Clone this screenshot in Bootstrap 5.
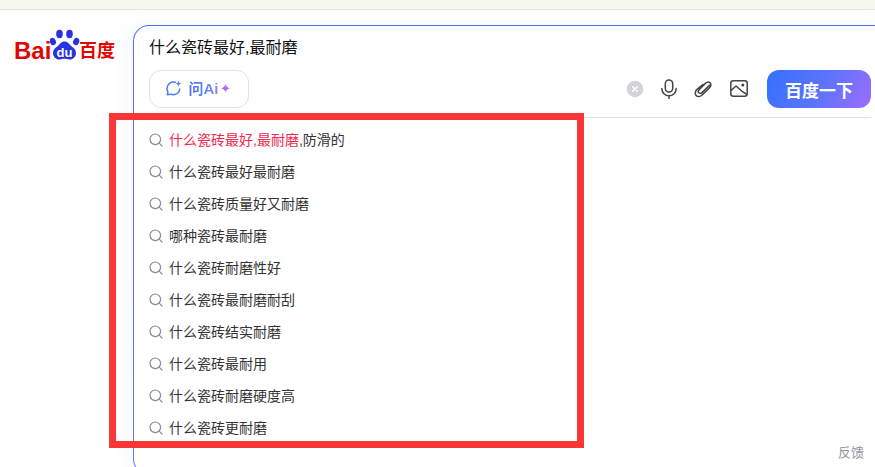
<!doctype html>
<html lang="zh-CN">
<head>
<meta charset="utf-8">
<title>百度一下</title>
<link href="https://cdn.jsdelivr.net/npm/bootstrap@5.3.0/dist/css/bootstrap.min.css" rel="stylesheet">
<style>
html,body{height:467px;overflow:hidden;background:#fff;}
body{position:relative;font-family:"Liberation Sans","Noto Sans CJK SC",sans-serif;color:#333;}
.strip{height:10px;background:#f6f8f0;border-bottom:1px solid #e3e5df;}
.logo-col{width:133px;flex:none;padding:18px 0 0 14px;}
.logo-wrap{display:flex;align-items:flex-end;height:34px;color:#e10601;font-weight:700;line-height:1;}
.logo-bai{font-size:24px;width:36px;line-height:17px;height:17px;display:block;margin-bottom:3px;}
.logo-cn{font-size:18px;line-height:18px;height:18px;display:block;margin-bottom:2px;margin-left:-1px;}
.paw{width:30px;height:34px;display:block;flex:none;}
.sbox{width:760px;flex:none;height:450px;margin-top:15px;border:1px solid transparent;border-radius:16px;
 background:linear-gradient(#fff,#fff) padding-box,linear-gradient(165deg,#4e6ef2 0%,#4e6ef2 35%,#9a7cf6 100%) border-box;
 box-shadow:-8px 0 16px rgba(110,130,240,.05);padding:0 15px;}
.sq{font-size:16px;line-height:22px;color:#111;padding-top:11px;height:44px;}
.tools{height:48px;border-bottom:1px solid #e0e0e0;width:722px;padding-bottom:10px;}
.ai-btn{width:100px;height:38px;border:1px solid #e1e1e6;border-radius:12px;background:#fff;gap:6px;padding:0 2px 0 0;}
.ai-txt{font-size:15px;font-weight:700;line-height:1;background:linear-gradient(90deg,#4e6ef2,#5f8bf5 60%,#a07cf0);-webkit-background-clip:text;background-clip:text;color:transparent;}
.ai-star{color:#b56af0;font-size:13px;line-height:1;margin-left:-5px;}
.tool-ic{display:block;flex:none;}
.go-btn{width:104px;height:38px;border-radius:12px;border:0;color:#fff;font-size:17px;font-weight:600;line-height:38px;padding:3px 0 0;
 background:linear-gradient(120deg,#3370ff 0%,#5f74fb 55%,#9d6dff 100%);}
.sug{padding:6px 0 0;margin:0;list-style:none;}
.sug li{height:32px;font-size:14px;line-height:32px;color:#333;gap:6px;}
.hit{color:#f5274e;}
.sug svg{flex:none;}
.frame{position:absolute;left:109px;top:113px;width:475px;height:335px;border:7px solid #fa3636;pointer-events:none;}
.fb{position:absolute;right:11px;top:445px;font-size:13px;line-height:16px;color:#9195a3;}
</style>
</head>
<body>
<div class="strip"></div>
<div class="d-flex">
  <div class="logo-col">
    <div class="logo-wrap">
      <span class="logo-bai">Bai</span>
      <svg class="paw" viewBox="0 0 30 34" aria-hidden="true">
        <g fill="#2932e1">
          <ellipse cx="9.5" cy="6" rx="3.3" ry="4.2"/>
          <ellipse cx="19.5" cy="6" rx="3.3" ry="4.2"/>
          <ellipse cx="2.8" cy="13.5" rx="3" ry="3.8" transform="rotate(-20 2.8 13.5)"/>
          <ellipse cx="26.2" cy="13.5" rx="3" ry="3.8" transform="rotate(20 26.2 13.5)"/>
          <path d="M14.5 13.5c3.2 0 4.4 2.4 6.4 4.2 2.2 1.9 5.1 3.4 5.1 7.2 0 4-3.1 6.6-6.6 6.6-1.9 0-3.2-.7-4.9-.7s-3 .7-4.9.7c-3.5 0-6.6-2.6-6.6-6.6 0-3.8 2.9-5.3 5.1-7.2 2-1.8 3.2-4.2 6.4-4.2z"/>
        </g>
        <text x="14.5" y="28.5" text-anchor="middle" fill="#fff" font-family="Liberation Sans" font-weight="700" font-size="13">du</text>
      </svg>
      <span class="logo-cn">百度</span>
    </div>
  </div>
  <div class="sbox">
    <div class="sq">什么瓷砖最好,最耐磨</div>
    <div class="tools d-flex align-items-center">
      <button type="button" class="ai-btn d-flex align-items-center justify-content-center">
        <svg width="17" height="17" viewBox="0 0 19 19" aria-hidden="true"><path d="M11.5 2.6A7.2 7.2 0 0 0 2.2 9.5c0 1.4.4 2.5 1 3.5l-.5 3.6 3.7-.8c.9.4 1.9.6 3 .6a7.2 7.2 0 0 0 7.1-6.2" fill="none" stroke="#4e7cf5" stroke-width="1.7" stroke-linecap="round" stroke-linejoin="round"/><path d="M15 1l.9 2.1L18 4l-2.1.9L15 7l-.9-2.1L12 4l2.1-.9z" fill="#4e7cf5"/></svg>
        <span class="ai-txt">问Ai</span><span class="ai-star">✦</span>
      </button>
      <div class="ms-auto d-flex align-items-center">
        <svg class="tool-ic" width="18" height="18" viewBox="0 0 18 18" aria-hidden="true"><circle cx="9" cy="9" r="8.3" fill="#d3d4da"/><path d="M6.7 6.7l4.6 4.6M11.3 6.7l-4.6 4.6" stroke="#fff" stroke-width="1.5" stroke-linecap="round"/></svg>
        <svg class="tool-ic ms-3" width="18" height="20" viewBox="0 0 18 20" aria-hidden="true"><rect x="5.3" y="1" width="7.4" height="12" rx="3.7" fill="none" stroke="#444" stroke-width="1.5"/><path d="M1.8 9.6a7.2 7.2 0 0 0 14.4 0M9 16.8V19.6" fill="none" stroke="#444" stroke-width="1.5" stroke-linecap="round"/></svg>
        <svg class="tool-ic" style="margin-left:16px" width="18" height="18" viewBox="0 0 18 18" aria-hidden="true"><path d="M15.4 5.2 8 12.6c-1 1-2.4 1-3.2.2s-.7-2.1.3-3.1l6.3-6.3c1.5-1.5 3.6-1.6 4.7-.5s1 3.2-.5 4.7l-7.2 7.2c-2 2-4.7 2.2-6.2.8s-1.2-4.2.8-6.2L8.9 4.5" fill="none" stroke="#444" stroke-width="1.5" stroke-linecap="round" stroke-linejoin="round"/></svg>
        <svg class="tool-ic" style="margin-left:18px" width="18" height="17" viewBox="0 0 18 17" aria-hidden="true"><rect x=".8" y=".8" width="16.4" height="15.4" rx="2.4" fill="none" stroke="#444" stroke-width="1.5"/><path d="M1 10.5 6 6l6 5.3 5 3.2" fill="none" stroke="#444" stroke-width="1.5" stroke-linejoin="round"/><circle cx="12.8" cy="5" r="1.5" fill="#444"/></svg>
        <button type="button" class="go-btn" style="margin-left:19px">百度一下</button>
      </div>
    </div>
    <ul class="sug">
      <li class="d-flex align-items-center"><svg width="14" height="14" viewBox="0 0 14 14" aria-hidden="true"><circle cx="6.3" cy="6.3" r="5.3" fill="none" stroke="#8a8a8f" stroke-width="1.2"/><path d="M10.2 10.2l2.9 2.9" stroke="#8a8a8f" stroke-width="1.2" stroke-linecap="round"/></svg><span><span class="hit">什么瓷砖最好,最耐磨</span>,防滑的</span></li>
      <li class="d-flex align-items-center"><svg width="14" height="14" viewBox="0 0 14 14" aria-hidden="true"><circle cx="6.3" cy="6.3" r="5.3" fill="none" stroke="#8a8a8f" stroke-width="1.2"/><path d="M10.2 10.2l2.9 2.9" stroke="#8a8a8f" stroke-width="1.2" stroke-linecap="round"/></svg><span>什么瓷砖最好最耐磨</span></li>
      <li class="d-flex align-items-center"><svg width="14" height="14" viewBox="0 0 14 14" aria-hidden="true"><circle cx="6.3" cy="6.3" r="5.3" fill="none" stroke="#8a8a8f" stroke-width="1.2"/><path d="M10.2 10.2l2.9 2.9" stroke="#8a8a8f" stroke-width="1.2" stroke-linecap="round"/></svg><span>什么瓷砖质量好又耐磨</span></li>
      <li class="d-flex align-items-center"><svg width="14" height="14" viewBox="0 0 14 14" aria-hidden="true"><circle cx="6.3" cy="6.3" r="5.3" fill="none" stroke="#8a8a8f" stroke-width="1.2"/><path d="M10.2 10.2l2.9 2.9" stroke="#8a8a8f" stroke-width="1.2" stroke-linecap="round"/></svg><span>哪种瓷砖最耐磨</span></li>
      <li class="d-flex align-items-center"><svg width="14" height="14" viewBox="0 0 14 14" aria-hidden="true"><circle cx="6.3" cy="6.3" r="5.3" fill="none" stroke="#8a8a8f" stroke-width="1.2"/><path d="M10.2 10.2l2.9 2.9" stroke="#8a8a8f" stroke-width="1.2" stroke-linecap="round"/></svg><span>什么瓷砖耐磨性好</span></li>
      <li class="d-flex align-items-center"><svg width="14" height="14" viewBox="0 0 14 14" aria-hidden="true"><circle cx="6.3" cy="6.3" r="5.3" fill="none" stroke="#8a8a8f" stroke-width="1.2"/><path d="M10.2 10.2l2.9 2.9" stroke="#8a8a8f" stroke-width="1.2" stroke-linecap="round"/></svg><span>什么瓷砖最耐磨耐刮</span></li>
      <li class="d-flex align-items-center"><svg width="14" height="14" viewBox="0 0 14 14" aria-hidden="true"><circle cx="6.3" cy="6.3" r="5.3" fill="none" stroke="#8a8a8f" stroke-width="1.2"/><path d="M10.2 10.2l2.9 2.9" stroke="#8a8a8f" stroke-width="1.2" stroke-linecap="round"/></svg><span>什么瓷砖结实耐磨</span></li>
      <li class="d-flex align-items-center"><svg width="14" height="14" viewBox="0 0 14 14" aria-hidden="true"><circle cx="6.3" cy="6.3" r="5.3" fill="none" stroke="#8a8a8f" stroke-width="1.2"/><path d="M10.2 10.2l2.9 2.9" stroke="#8a8a8f" stroke-width="1.2" stroke-linecap="round"/></svg><span>什么瓷砖最耐用</span></li>
      <li class="d-flex align-items-center"><svg width="14" height="14" viewBox="0 0 14 14" aria-hidden="true"><circle cx="6.3" cy="6.3" r="5.3" fill="none" stroke="#8a8a8f" stroke-width="1.2"/><path d="M10.2 10.2l2.9 2.9" stroke="#8a8a8f" stroke-width="1.2" stroke-linecap="round"/></svg><span>什么瓷砖耐磨硬度高</span></li>
      <li class="d-flex align-items-center"><svg width="14" height="14" viewBox="0 0 14 14" aria-hidden="true"><circle cx="6.3" cy="6.3" r="5.3" fill="none" stroke="#8a8a8f" stroke-width="1.2"/><path d="M10.2 10.2l2.9 2.9" stroke="#8a8a8f" stroke-width="1.2" stroke-linecap="round"/></svg><span>什么瓷砖更耐磨</span></li>
    </ul>
  </div>
</div>
<div class="frame"></div>
<div class="fb">反馈</div>
<script src="https://cdn.jsdelivr.net/npm/bootstrap@5.3.0/dist/js/bootstrap.bundle.min.js"></script>
</body>
</html>
